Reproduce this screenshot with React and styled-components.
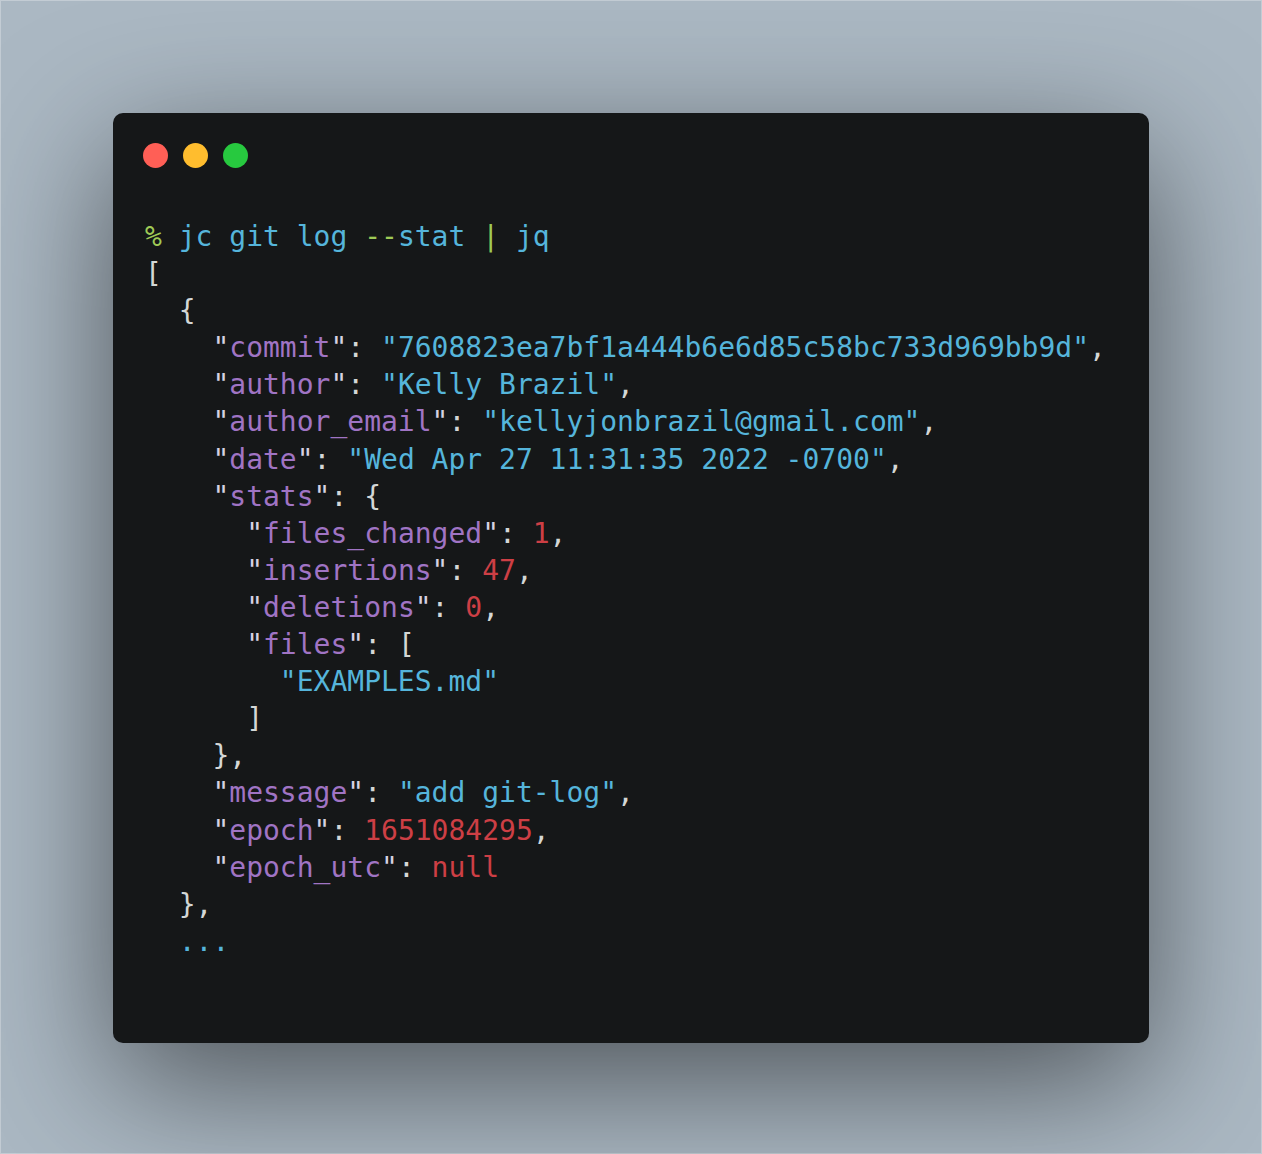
import React from "react";
import styled, { createGlobalStyle } from "styled-components";

const GlobalStyle = createGlobalStyle`
  html, body {
    margin: 0;
    padding: 0;
    background: #abb8c3;
  }
  * {
    box-sizing: border-box;
  }
`;

const colors = {
  text: "#d4d7d6",
  quote: "#d6d2e2",
  green: "#9fca56",
  blue: "#55b5db",
  purple: "#a074c4",
  red: "#cd3f45",
};

const Page = styled.div`
  width: 1262px;
  height: 1154px;
  background: #abb8c3;
  border: 1px solid #c3ccd4;
  display: flex;
  align-items: flex-start;
  justify-content: center;
  padding-top: 112px;
`;

const Window = styled.div`
  width: 1036px;
  height: 930px;
  background: #151718;
  border-radius: 10px;
  box-shadow: 0 40px 136px rgba(0, 0, 0, 0.55);
  display: flex;
  flex-direction: column;
`;

const Controls = styled.div`
  display: flex;
  gap: 15px;
  padding: 30px 0 0 30px;
`;

const Dot = styled.span`
  width: 25px;
  height: 25px;
  border-radius: 50%;
  background: ${(p) => p.color};
`;

const Code = styled.pre`
  margin: 50px 0 0 0;
  padding: 0 32px;
  font-family: "DejaVu Sans Mono", "Liberation Mono", monospace;
  font-size: 28px;
  line-height: 37.1px;
  color: ${colors.text};
  white-space: pre;
`;

const Line = styled.div`
  height: 37.1px;
`;

const Tok = styled.span`
  color: ${(p) => colors[p.c] || colors.text};
`;

// key -> purple with light quotes, value string -> blue
const key = (k) => [
  ["quote", '"'],
  ["purple", k],
  ["quote", '"'],
  ["text", ": "],
];
const str = (s) => [["blue", `"${s}"`]];

const lines = [
  [["green", "% "], ["blue", "jc git log "], ["green", "--"], ["blue", "stat "], ["green", "| "], ["blue", "jq"]],
  [["text", "["]],
  [["text", "  {"]],
  [["text", "    "], ...key("commit"), ...str("7608823ea7bf1a444b6e6d85c58bc733d969bb9d"), ["text", ","]],
  [["text", "    "], ...key("author"), ...str("Kelly Brazil"), ["text", ","]],
  [["text", "    "], ...key("author_email"), ...str("kellyjonbrazil@gmail.com"), ["text", ","]],
  [["text", "    "], ...key("date"), ...str("Wed Apr 27 11:31:35 2022 -0700"), ["text", ","]],
  [["text", "    "], ...key("stats"), ["text", "{"]],
  [["text", "      "], ...key("files_changed"), ["red", "1"], ["text", ","]],
  [["text", "      "], ...key("insertions"), ["red", "47"], ["text", ","]],
  [["text", "      "], ...key("deletions"), ["red", "0"], ["text", ","]],
  [["text", "      "], ...key("files"), ["text", "["]],
  [["text", "        "], ...str("EXAMPLES.md")],
  [["text", "      ]"]],
  [["text", "    },"]],
  [["text", "    "], ...key("message"), ...str("add git-log"), ["text", ","]],
  [["text", "    "], ...key("epoch"), ["red", "1651084295"], ["text", ","]],
  [["text", "    "], ...key("epoch_utc"), ["red", "null"]],
  [["text", "  },"]],
  [["text", "  "], ["blue", "..."]],
];

export default function App() {
  return (
    <>
      <GlobalStyle />
      <Page>
        <Window>
          <Controls>
            <Dot color="#ff5f56" />
            <Dot color="#ffbd2e" />
            <Dot color="#27c93f" />
          </Controls>
          <Code>
            {lines.map((line, i) => (
              <Line key={i}>
                {line.map(([c, t], j) => (
                  <Tok key={j} c={c}>
                    {t}
                  </Tok>
                ))}
              </Line>
            ))}
          </Code>
        </Window>
      </Page>
    </>
  );
}
